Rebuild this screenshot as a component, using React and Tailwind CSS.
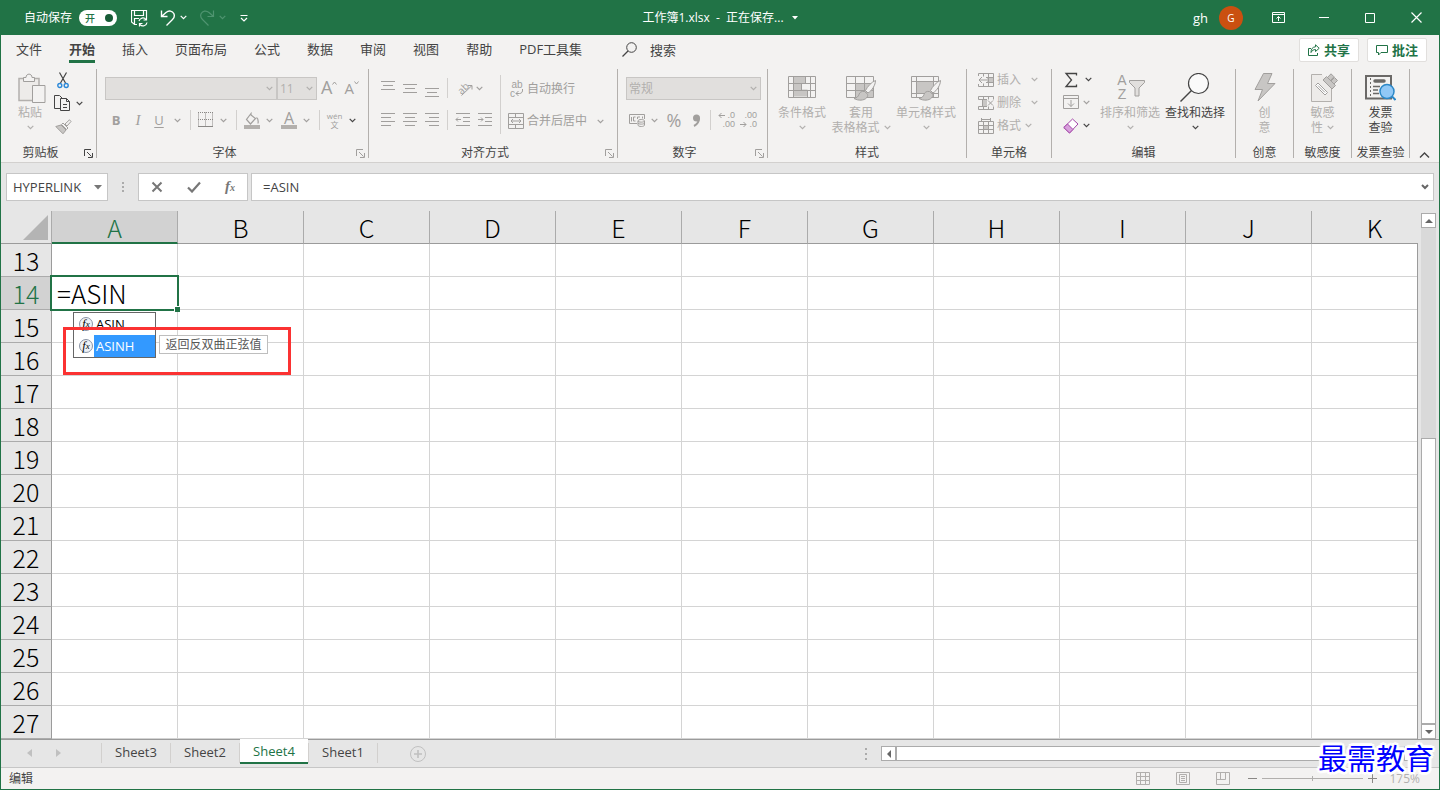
import { useState } from 'react';
import clsx from 'clsx';

const MENU_TABS = ['文件', '开始', '插入', '页面布局', '公式', '数据', '审阅', '视图', '帮助', 'PDF工具集'];
const COLUMNS = ['A', 'B', 'C', 'D', 'E', 'F', 'G', 'H', 'I', 'J', 'K'];
const ROWS = Array.from({ length: 15 }, (_, i) => i + 13);
const SHEETS = ['Sheet3', 'Sheet2', 'Sheet4', 'Sheet1'];

// 所有线条图标共用的 svg 外壳
function Icon({ w = 16, h = 16, className, children }) {
  return (
    <svg
      width={w}
      height={h}
      viewBox={`0 0 ${w} ${h}`}
      fill="none"
      stroke="currentColor"
      aria-hidden="true"
      className={clsx('shrink-0', className)}
    >
      {children}
    </svg>
  );
}

function Chevron({ className }) {
  return (
    <Icon w={7} h={5} className={className}>
      <path d="M.7 .9 3.5 3.7 6.3 .9" strokeWidth="1.2" />
    </Icon>
  );
}

function Divider({ className }) {
  return <span className={clsx('w-px shrink-0 bg-[#d2d0ce]', className)} />;
}

function ToolButton({ label, className, children }) {
  return (
    <button
      type="button"
      aria-label={label}
      className={clsx('flex h-6 shrink-0 items-center justify-center', className)}
    >
      {children}
    </button>
  );
}

function Group({ label, launcher, dark, className, children }) {
  return (
    <section className={clsx('flex h-[97px] shrink-0', className)}>
      <div className="flex min-w-0 flex-1 flex-col">
        <div className="flex flex-1">{children}</div>
        <div className="flex h-[18px] items-center text-[#444]">
          <span className="flex-1 text-center whitespace-nowrap">{label}</span>
          {launcher && (
            <button
              type="button"
              aria-label={`${label}设置`}
              className={clsx('w-4 pl-1', dark ? 'text-[#444]' : 'text-[#a19f9d]')}
            >
              <Icon w={9} h={9}>
                <path d="M.5 7V.5H7M3 3l4.500 4.500M8.500 4v4.500H4" />
              </Icon>
            </button>
          )}
        </div>
      </div>
      <span className="mt-1 h-[89px] w-px bg-[#b3b0ad]" />
    </section>
  );
}

function BigButton({ icon, lines, chevron, inline, className }) {
  return (
    <button
      type="button"
      className={clsx('flex shrink-0 flex-col items-center pt-2 leading-[15px] whitespace-nowrap', className)}
    >
      <span className="flex h-8 items-start">{icon}</span>
      <span>{lines[0]}</span>
      {lines[1] && (
        <span className="flex items-center gap-1">
          {lines[1]}
          {inline && <Chevron />}
        </span>
      )}
      {chevron && (
        <span className="flex h-[15px] items-center">
          <Chevron />
        </span>
      )}
    </button>
  );
}

function Picker({ label, value, className }) {
  return (
    <label
      className={clsx(
        'flex h-[23px] items-center border border-[#c8c6c4] bg-[#e1dfdd] pr-[3px] text-[#b1afad]',
        className
      )}
    >
      <select aria-label={label} className="min-w-0 flex-1 appearance-none bg-transparent pl-[2px] outline-none">
        <option>{value}</option>
      </select>
      <Chevron />
    </label>
  );
}

function Lines({ rows }) {
  return (
    <Icon w={16} h={17}>
      {rows.map(([x1, x2, y]) => (
        <path key={y} d={`M${x1} ${y}.5H${x2}`} />
      ))}
    </Icon>
  );
}

function Brush() {
  return (
    <>
      <path d="M29.500 7.500c-4 1.500-8 6-10 10l2.500 2.500C26 17.500 29.500 12 29.500 7.500Z" fill="#f3f2f1" />
      <path d="M18.500 18.500c-3-.5-5 .8-5.500 3-.4 2-2.500 3.500-5 4 4.500 2.500 10 2 12.500-.5 1.500-1.500 1.500-3.500.5-4.500Z" fill="#c8c6c4" />
    </>
  );
}

function TitleBar() {
  const [autoSave, setAutoSave] = useState(true);

  return (
    <header className="-mx-px flex h-[35px] items-center bg-[#217346] text-white">
      <div className="flex flex-1 items-center">
        <label className="ml-6 flex items-center gap-[7px]">
          自动保存
          <input
            type="checkbox"
            className="sr-only"
            checked={autoSave}
            onChange={(e) => setAutoSave(e.target.checked)}
          />
          <span className="flex h-4 w-[38px] items-center justify-between rounded-full bg-white pr-1 pl-[6px] text-[10px] font-medium text-[#217346]">
            开
            <span className="size-2 rounded-full bg-[#185c37]" />
          </span>
        </label>
        <button type="button" aria-label="保存" className="ml-[14px]">
          <Icon w={17} h={18}>
            <path d="M6 15.500H3.500L.5 13V1.500h15V8M3.500 1.500V6.500h9v-5M3.500 15V9.500H8" strokeWidth="1.2" />
            <path d="M8 12a4 4 0 0 1 7-1.500M15.500 8v3H12.500M16 13.500a4 4 0 0 1-7 2M8.500 17.500v-3h3" strokeWidth="1.2" />
          </Icon>
        </button>
        <button type="button" aria-label="撤消" className="ml-3 flex items-center gap-1">
          <Icon w={16} h={18}>
            <path d="M1.500 1.500v6h6M1.500 7.500 6 3.500c3-2.500 6.500-1.500 7.800 1 1.200 2.500.2 4.500-1.300 6L6.500 16.500" strokeWidth="1.400" />
          </Icon>
          <Chevron />
        </button>
        <button type="button" aria-label="恢复" className="ml-3 flex items-center gap-1 text-[#4f9470]">
          <Icon w={16} h={18}>
            <path d="M14.500 1.500v6h-6M14.500 7.500 10 3.500C7 1 3.500 2 2.200 4.500 1 7 2 9 3.500 10.500L9.500 16.500" strokeWidth="1.200" />
          </Icon>
          <Chevron />
        </button>
        <button type="button" aria-label="自定义快速访问工具栏" className="ml-[14px]">
          <Icon w={8} h={8}>
            <path d="M.5 1.500h7M1 4l3 3 3-3" strokeWidth="1.200" />
          </Icon>
        </button>
      </div>

      <h1 className="flex items-center gap-2 whitespace-pre">
        工作簿1.xlsx  -  正在保存...
        <Icon w={6} h={4}>
          <path d="M0 0h6L3 3.500Z" fill="currentColor" stroke="none" />
        </Icon>
      </h1>

      <div className="flex flex-1 items-center justify-end">
        <span className="mr-[11px] text-[13px]">gh</span>
        <span className="mr-3 flex size-6 items-center justify-center rounded-full bg-[#ca5010] text-[10px]">
          G
        </span>
        <button type="button" aria-label="功能区显示选项" className="flex w-[46px] justify-center">
          <Icon w={13} h={11}>
            <path d="M.5.5h12v10H.5ZM.5 2.500h12M6.500 9V4.500M4.500 6.500l2-2 2 2" />
          </Icon>
        </button>
        <button type="button" aria-label="最小化" className="flex w-[46px] justify-center">
          <Icon w={10} h={11}>
            <path d="M0 5.500h10" />
          </Icon>
        </button>
        <button type="button" aria-label="最大化" className="flex w-[46px] justify-center">
          <Icon w={10} h={10}>
            <path d="M.5.5h9v9h-9Z" />
          </Icon>
        </button>
        <button type="button" aria-label="关闭" className="mr-px flex w-[46px] justify-center">
          <Icon w={11} h={11}>
            <path d="M.5.5l10 10M10.500.5l-10 10" strokeWidth="1.200" />
          </Icon>
        </button>
      </div>
    </header>
  );
}

function MenuTabs() {
  return (
    <nav className="flex h-[30px] items-center pr-3 pl-[15px] text-[13px] text-[#444]">
      <div className="flex gap-[27px]">
        {MENU_TABS.map((tab) => (
          <button
            key={tab}
            type="button"
            className={clsx(
              'h-[26px] border-b-3 leading-[22px] whitespace-nowrap',
              tab === '开始' ? 'border-[#217346] font-bold' : 'border-transparent'
            )}
          >
            {tab}
          </button>
        ))}
      </div>
      <button type="button" className="ml-10 flex items-center gap-[13px] pb-px">
        <Icon w={15} h={15}>
          <circle cx="9.500" cy="5.500" r="4.800" />
          <path d="M6 9 .5 14.500" strokeWidth="1.200" />
        </Icon>
        搜索
      </button>
      <div className="ml-auto flex gap-2 font-bold text-[#217346]">
        <button
          type="button"
          className="flex h-6 w-[60px] items-center justify-center gap-1 rounded-xs border border-[#e1dfdd] bg-white"
        >
          <Icon w={12} h={12}>
            <path d="M3 4.500H.5v7h9V9M7.500.8l3.700 3.500L7.500 7.500V5.500C5.500 5.500 4 6.500 3 8.500c0-3.500 1.500-5.500 4.500-5.700Z" />
          </Icon>
          共享
        </button>
        <button
          type="button"
          className="flex h-6 w-[60px] items-center justify-center gap-1 rounded-xs border border-[#e1dfdd] bg-white"
        >
          <Icon w={12} h={11}>
            <path d="M.5.5h11v7H5l-2.500 2.500V7.500h-2Z" />
          </Icon>
          批注
        </button>
      </div>
    </nav>
  );
}

function ClipboardGroup() {
  return (
    <Group label="剪贴板" launcher dark className="w-24">
      <BigButton
        className="ml-3 w-[34px]"
        lines={['粘贴']}
        chevron
        icon={
          <Icon w={28} h={31} className="ml-1 text-[#a19f9d]">
            <path d="M1 5.500h20v22H1Z" fill="#edebe9" stroke="#b3b0ad" strokeWidth="1.500" />
            <path d="M5.500 8.500v-4H8C8 0 14 0 14 4.500h2.500v4Z" fill="#f3f2f1" />
            <path d="M14.500 12.500h12.500v17H14.500Z" fill="#f3f2f1" />
          </Icon>
        }
      />
      <div className="flex flex-col items-start pt-1 pl-[7px] text-[#444]">
        <ToolButton label="剪切" className="h-[23px] w-[18px]">
          <Icon w={12} h={17}>
            <path d="M2.500.5 8.500 11M9.500.5 3.500 11" strokeWidth="1.200" />
            <circle cx="2.800" cy="13.500" r="2" stroke="#2b88d8" strokeWidth="1.400" />
            <circle cx="9.200" cy="13.500" r="2" stroke="#2b88d8" strokeWidth="1.400" />
          </Icon>
        </ToolButton>
        <ToolButton label="复制" className="h-[23px] gap-[5px]">
          <Icon w={17} h={17}>
            <path d="M6 13.500H.5V.5h5l3 3M6.500 3.500h6l3 3v9h-9ZM12.500 3.500v3h3M9 9.500h4M9 12.500h4" />
          </Icon>
          <Chevron />
        </ToolButton>
        <ToolButton label="格式刷" className="h-[23px] w-[18px] text-[#a19f9d]">
          <Icon w={17} h={16}>
            <path d="M14.500.8 10 5l2 2 4-4.500ZM8 4l5 5-1.500 1.500-5-5Z" fill="#f3f2f1" />
            <path d="M6 6 .8 7.500 8 14.800 11 11Z" fill="#c8c6c4" />
          </Icon>
        </ToolButton>
      </div>
    </Group>
  );
}

function FontGroup() {
  return (
    <Group label="字体" launcher className="w-[272px]">
      <div className="flex flex-col gap-2 pt-3 pl-2 text-[#a19f9d]">
        <div className="flex items-center">
          <Picker label="字体名称" value="" className="w-[172px]" />
          <Picker label="字号" value="11" className="w-10" />
          <ToolButton label="增大字号" className="ml-1 h-[23px] items-start text-[18px] leading-5">
            A
            <Icon w={5} h={4} className="mt-1">
              <path d="M.5 3.500 2.500 1l2 2.500" />
            </Icon>
          </ToolButton>
          <ToolButton label="减小字号" className="ml-[7px] h-[23px] items-start text-[15px] leading-[22px]">
            A
            <Icon w={5} h={4} className="mt-1">
              <path d="M.5.5 2.500 3l2-2.500" />
            </Icon>
          </ToolButton>
        </div>
        <div className="flex items-center text-[13px]">
          <ToolButton label="加粗" className="w-[22px] font-bold">
            B
          </ToolButton>
          <ToolButton label="倾斜" className="w-[22px] font-['Liberation_Serif',serif] text-[15px] italic">
            I
          </ToolButton>
          <ToolButton label="下划线" className="w-5 underline underline-offset-2">
            U
          </ToolButton>
          <ToolButton label="下划线样式" className="w-4">
            <Chevron />
          </ToolButton>
          <Divider className="ml-[5px] h-5" />
          <ToolButton label="边框" className="w-[29px]">
            <Icon w={15} h={16}>
              <path d="M0 .5h15M0 7.500h15M.5.5v14M7.500.5v14M14.500.5v14" strokeDasharray="1 1" stroke="#8a8886" />
              <path d="M0 14.500h15" stroke="#8a8886" />
            </Icon>
          </ToolButton>
          <Chevron />
          <Divider className="ml-[9px] h-5" />
          <ToolButton label="填充颜色" className="w-[29px]">
            <Icon w={16} h={17}>
              <path d="M7 1.500 2.500 7.500l4 4.500L11.500 6.500 7 3Z M12.500 5.500c1.500 1 2 3 1.500 6" strokeWidth="1.200" />
              <path d="M0 15h16" strokeWidth="4" stroke="#b3b0ad" />
            </Icon>
          </ToolButton>
          <Chevron />
          <ToolButton label="字体颜色" className="ml-[2px] w-7 flex-col">
            <span className="text-[16px] leading-[14px]">A</span>
            <span className="h-[4px] w-4 bg-[#b3b0ad]" />
          </ToolButton>
          <Chevron />
          <Divider className="ml-[9px] h-5" />
          <ToolButton label="拼音指南" className="w-[29px] flex-col text-[8px] leading-[9px]">
            <span>wén</span>
            <span>文</span>
          </ToolButton>
          <Chevron className="text-[#444]" />
        </div>
      </div>
    </Group>
  );
}

function AlignGroup() {
  return (
    <Group label="对齐方式" launcher className="w-[249px]">
      <div className="flex text-[#a19f9d]">
        <div className="flex w-[131px] flex-col gap-2 pt-[11px] pl-2">
          <div className="flex items-center">
            <ToolButton label="顶端对齐" className="w-[22px]">
              <Lines rows={[[1, 15, 1], [3, 13, 5], [1, 15, 9]]} />
            </ToolButton>
            <ToolButton label="垂直居中" className="w-[22px]">
              <Lines rows={[[1, 15, 4], [3, 13, 8], [1, 15, 12]]} />
            </ToolButton>
            <ToolButton label="底端对齐" className="w-[22px]">
              <Lines rows={[[1, 15, 8], [3, 13, 12], [1, 15, 16]]} />
            </ToolButton>
            <Divider className="ml-1 h-5" />
            <ToolButton label="方向" className="ml-[6px] w-[22px]">
              <span className="-rotate-45 text-[10px] leading-[10px]">ab</span>
              <Icon w={12} h={12} className="mt-1 -ml-2">
                <path d="M.5 11.500 11 1.500M7 1.500h4v4" />
              </Icon>
            </ToolButton>
            <Chevron />
          </div>
          <div className="flex items-center">
            <ToolButton label="左对齐" className="w-[22px]">
              <Lines rows={[[1, 15, 1], [1, 11, 5], [1, 15, 9], [1, 11, 13]]} />
            </ToolButton>
            <ToolButton label="居中" className="w-[22px]">
              <Lines rows={[[1, 15, 1], [3, 13, 5], [1, 15, 9], [3, 13, 13]]} />
            </ToolButton>
            <ToolButton label="右对齐" className="w-[22px]">
              <Lines rows={[[1, 15, 1], [5, 15, 5], [1, 15, 9], [5, 15, 13]]} />
            </ToolButton>
            <Divider className="ml-1 h-5" />
            <ToolButton label="减少缩进量" className="ml-1 w-[22px]">
              <Icon w={16} h={16}>
                <path d="M1 1.500h14M8 5.500h7M8 9.500h7M1 13.500h14M6 7.500H1M3 5.500l-2 2 2 2" />
              </Icon>
            </ToolButton>
            <ToolButton label="增加缩进量" className="w-[22px]">
              <Icon w={16} h={16}>
                <path d="M1 1.500h14M8 5.500h7M8 9.500h7M1 13.500h14M1 7.500h5M4 5.500l2 2-2 2" />
              </Icon>
            </ToolButton>
          </div>
        </div>
        <Divider className="mt-[10px] h-[59px]" />
        <div className="flex flex-col items-start gap-2 pt-3 pl-[7px]">
          <ToolButton className="gap-[3px]">
            <span className="flex w-4 flex-col pl-[2px] font-['Liberation_Sans',sans-serif] text-[10px] leading-[9px]">
              <span>ab</span>
              <span className="flex items-center">
                c
                <Icon w={8} h={9}>
                  <path d="M7.500 0c.5 3-1 4.500-3 4.500H1M3.500 2 1 4.500 3.500 7" />
                </Icon>
              </span>
            </span>
            自动换行
          </ToolButton>
          <ToolButton className="gap-[3px]">
            <Icon w={16} h={16}>
              <path d="M.5.5h15v15H.5ZM.5 4.500h15M.5 11.500h15M7.500.5v4M7.500 11.500v4M3 8h10M5 6 3 8l2 2M11 6l2 2-2 2" />
            </Icon>
            合并后居中
            <Chevron className="ml-[7px]" />
          </ToolButton>
        </div>
      </div>
    </Group>
  );
}

function NumberGroup() {
  return (
    <Group label="数字" launcher className="w-[150px]">
      <div className="flex flex-col gap-2 pt-3 pl-2 text-[#a19f9d]">
        <Picker label="数字格式" value="常规" className="w-[135px]" />
        <div className="flex items-center">
          <ToolButton label="会计数字格式" className="w-[22px]">
            <Icon w={16} h={14}>
              <path d="M8 10.500H.5V1.500h15V6M2.500 4v4.500M6.500 4H4.500v4h2M8.500 6V4h2.500M13.500 3.500v2M9 8c0-2 6.500-2 6.500 0v4c0 2-6.500 2-6.500 0ZM9 8c0 1.500 6.500 1.500 6.500 0M9 10c0 1.500 6.500 1.500 6.500 0" />
            </Icon>
          </ToolButton>
          <Chevron className="ml-[3px]" />
          <ToolButton label="百分比样式" className="ml-[6px] w-5 text-[18px]">
            %
          </ToolButton>
          <ToolButton label="千位分隔样式" className="ml-[2px] w-5">
            <Icon w={9} h={13}>
              <circle cx="4.500" cy="4" r="3.500" fill="currentColor" stroke="none" />
              <path d="M7 4c0 4-2 6.500-5 8" strokeWidth="2" />
            </Icon>
          </ToolButton>
          <Divider className="ml-1 h-5" />
          <ToolButton
            label="增加小数位数"
            className="ml-[6px] w-[18px] flex-col items-end font-['Liberation_Sans',sans-serif] text-[9px] leading-[9px]"
          >
            <span className="flex items-center gap-[2px]">
              <Icon w={7} h={7}>
                <path d="M7 3.500H1M3.500 1 1 3.500 3.500 6" />
              </Icon>
              .0
            </span>
            <span>.00</span>
          </ToolButton>
          <ToolButton
            label="减少小数位数"
            className="ml-1 w-[18px] flex-col items-end font-['Liberation_Sans',sans-serif] text-[9px] leading-[9px]"
          >
            <span>.00</span>
            <span className="flex items-center gap-[2px]">
              <Icon w={7} h={7}>
                <path d="M0 3.500h6M3.500 1 6 3.500 3.500 6" />
              </Icon>
              .0
            </span>
          </ToolButton>
        </div>
      </div>
    </Group>
  );
}

function StylesGroup() {
  return (
    <Group label="样式" className="w-[199px]">
      <BigButton
        className="ml-1 w-[60px]"
        lines={['条件格式']}
        chevron
        icon={
          <Icon w={28} h={26} className="text-[#a19f9d]">
            <path d="M5.500 3.500h12v7h-4v6h6v7h-14Z" fill="#c8c6c4" stroke="none" />
            <path d="M.5 3.500h27v21H.5ZM.5 10.500h27M.5 17.500h27M5.500 3.500v21M17.500 3.500v7M13.500 10.500v7M19.500 17.500v7M22.500 3.500v21" />
          </Icon>
        }
      />
      <BigButton
        className="w-[58px]"
        lines={['套用', '表格格式']}
        inline
        icon={
          <Icon w={31} h={30} className="text-[#a19f9d]">
            <path d="M10 10.500h17v14H10Z" fill="#c8c6c4" stroke="none" />
            <path d="M.5 3.500h27v21H.5ZM.5 10.500h27M.5 17.500h27M9.500 3.500v21M18.500 3.500v21" />
            <Brush />
          </Icon>
        }
      />
      <BigButton
        className="w-[72px]"
        lines={['单元格样式']}
        chevron
        icon={
          <Icon w={31} h={30} className="text-[#a19f9d]">
            <path d="M5.500 8.500h17v12h-17Z" fill="#c8c6c4" stroke="none" />
            <path d="M.5 3.500h27v21H.5ZM.5 8.500h27M.5 20.500h27M5.500 3.500v21M22.500 3.500v21" />
            <Brush />
          </Icon>
        }
      />
    </Group>
  );
}

function CellsGroup() {
  return (
    <Group label="单元格" className="w-[85px]">
      <div className="flex flex-col items-start pt-[3px] pl-[11px]">
        <ToolButton className="h-[23px] gap-[3px]">
          <Icon className="text-[#a19f9d]">
            <path d="M9 5h6v6H9Z" fill="#c8c6c4" stroke="none" />
            <path d="M.5 4V1.500h15v13H.5V12M5.500 1.500v3M10.500 1.500v13M5.500 11.500v3M8 5.500h7.500M8 10.500h7.500M1 8h8M4 5 1 8l3 3" />
          </Icon>
          插入
          <Chevron className="ml-[7px]" />
        </ToolButton>
        <ToolButton className="h-[23px] gap-[3px]">
          <Icon className="text-[#a19f9d]">
            <path d="M4 5h5v6H4Z" fill="#c8c6c4" stroke="none" />
            <path d="M.5 4.500v-3h15v3M.5 11.500v3h15v-3M5.500 1.500v3M10.500 1.500v3M5.500 11.500v3M10.500 11.500v3M.5 4.500H9M.5 11.500H9M4.500 4.500v7M10 5.500l5 5M15 5.500l-5 5" />
          </Icon>
          删除
          <Chevron className="ml-[7px]" />
        </ToolButton>
        <ToolButton className="h-[23px] gap-[3px]">
          <Icon className="text-[#a19f9d]">
            <path d="M5 7h6v5H5Z" fill="#c8c6c4" stroke="none" />
            <path d="M.5 3.500h15v12H.5ZM.5 7.500h15M.5 11.500h15M5.500 3.500v12M10.500 3.500v12M3.500 0v3M12.500 0v3M3.500 1.500h9" />
          </Icon>
          格式
          <Chevron className="ml-px" />
        </ToolButton>
      </div>
    </Group>
  );
}

function EditingGroup() {
  return (
    <Group label="编辑" className="w-[184px]">
      <div className="flex w-[45px] flex-col items-start pt-[3px] pl-[11px] text-[#444]">
        <ToolButton label="求和" className="h-[23px] gap-[6px]">
          <Icon w={16} h={16}>
            <path d="M13.500 3.500v-2H3L8.500 8 3 14.500h10.500v-2" strokeWidth="1.300" />
          </Icon>
          <Chevron />
        </ToolButton>
        <ToolButton label="填充" className="h-[23px] gap-1 text-[#a19f9d]">
          <Icon w={16} h={15}>
            <path d="M.5.5h15v13H.5ZM.5 3.500h15M8 5v6.500M5 8.500l3 3 3-3" />
          </Icon>
          <Chevron />
        </ToolButton>
        <ToolButton label="清除" className="h-[23px] gap-1">
          <Icon w={16} h={16} className="text-[#a347a8]">
            <path d="M.8 9.500 9.500 1l5.500 5-8.500 9Z" fill="#fff" />
            <path d="M.8 9.500 4.500 6l5.500 5.500L6.500 15Z" fill="#d8a0dc" />
          </Icon>
          <Chevron />
        </ToolButton>
      </div>
      <BigButton
        className="w-[66px]"
        lines={['排序和筛选']}
        chevron
        icon={
          <span className="flex text-[#a19f9d]">
            <span className="flex w-[13px] flex-col font-['Liberation_Sans',sans-serif] text-[14px] leading-[14px]">
              <span>A</span>
              <span>Z</span>
            </span>
            <Icon w={16} h={25}>
              <path d="M.5 7.500h15v2l-5.500 5.500v8H6v-8L.5 9.500Z" fill="#e1dfdd" />
            </Icon>
          </span>
        }
      />
      <BigButton
        className="w-[64px] text-[#444]"
        lines={['查找和选择']}
        chevron
        icon={
          <Icon w={30} h={30}>
            <circle cx="18.500" cy="10.500" r="10" fill="#fafafa" strokeWidth="1.200" />
            <path d="M11.500 17.500.5 28.500" strokeWidth="1.400" />
          </Icon>
        }
      />
    </Group>
  );
}

function Ribbon() {
  return (
    <div className="flex h-[98px] border-b border-[#d2d0ce] text-[#b1afad]">
      <ClipboardGroup />
      <FontGroup />
      <AlignGroup />
      <NumberGroup />
      <StylesGroup />
      <CellsGroup />
      <EditingGroup />
      <Group label="创意" className="w-[58px]">
        <BigButton
          className="w-full"
          lines={['创', '意']}
          icon={
            <Icon w={22} h={29} className="text-[#a19f9d]">
              <path d="M9.500.5h8.500L13.500 10.500h7.500L4 28l4.500-11.500H1Z" fill="#c8c6c4" />
            </Icon>
          }
        />
      </Group>
      <Group label="敏感度" className="w-[58px]">
        <BigButton
          className="w-full"
          lines={['敏感', '性']}
          inline
          icon={
            <Icon w={27} h={30} className="ml-[3px] text-[#a19f9d]">
              <path d="M11 1.500H.5v27h20V15" fill="#edebe9" stroke="#b3b0ad" />
              <path d="m4.500 12.500 2.500-2.500 9.500 9.500-2.500 2.500Z" fill="#fff" />
              <path d="m7 12.500 7 7" />
              <path d="m12 7 3.500-3.500 9 9L21 16ZM16.500 4.500 20 .8l3 3-3.500 3.700M20 8l3.500-3.500 3 3L23 11" fill="#c8c6c4" />
            </Icon>
          }
        />
      </Group>
      <Group label="发票查验" className="w-[58px]">
        <BigButton
          className="w-full text-[#444]"
          lines={['发票', '查验']}
          icon={
            <Icon w={31} h={28} className="text-[#6b6967]">
              <path d="M1 3h25v22.500H1Z" strokeWidth="2" />
              <path d="M5.500 5v19" strokeDasharray="2 2" />
              <path d="M10 8h9" strokeWidth="3.500" strokeLinecap="round" />
              <path d="M8 13.500h7M8 17h5M8 20.500h6" strokeWidth="1.500" />
              <circle cx="22" cy="18.500" r="7" fill="#91c8f6" stroke="#2b88c8" strokeWidth="1.500" />
              <path d="m27 23.500 3.500 3.500" stroke="#2b88c8" strokeWidth="2" />
            </Icon>
          }
        />
      </Group>
      <div className="flex flex-1 items-end justify-center pb-1">
        <button type="button" aria-label="折叠功能区" className="text-[#444]">
          <Icon w={11} h={6}>
            <path d="M1 5.500 5.500 1 10 5.500" strokeWidth="1.400" />
          </Icon>
        </button>
      </div>
    </div>
  );
}

function FormulaBar() {
  return (
    <div className="flex h-12 items-center bg-[#e6e6e6] pr-[5px] pl-[5px] text-[13px] text-[#444]">
      <label className="flex h-7 w-[102px] shrink-0 items-center border border-[#c6c6c6] bg-white pr-[5px]">
        <input
          aria-label="名称框"
          defaultValue="HYPERLINK"
          className="min-w-0 flex-1 pl-[6px] outline-none"
        />
        <Icon w={8} h={5} className="text-[#777]">
          <path d="M0 0h8L4 4.500Z" fill="currentColor" stroke="none" />
        </Icon>
      </label>
      <span className="mx-[14px] flex flex-col gap-[2px]">
        <i className="size-[2px] bg-[#ababab]" />
        <i className="size-[2px] bg-[#ababab]" />
        <i className="size-[2px] bg-[#ababab]" />
      </span>
      <div className="flex h-7 w-[110px] shrink-0 items-center justify-around border border-[#c6c6c6] bg-white text-[#777]">
        <button type="button" aria-label="取消">
          <Icon w={12} h={12}>
            <path d="m1.500 1.500 9 9M10.500 1.500l-9 9" strokeWidth="2" />
          </Icon>
        </button>
        <button type="button" aria-label="输入">
          <Icon w={14} h={12}>
            <path d="M1 6.500 5 10.500 13 1.500" strokeWidth="2.200" />
          </Icon>
        </button>
        <button type="button" aria-label="插入函数" className="font-['Liberation_Serif',serif] text-[15px] font-bold italic">
          f<span className="text-[10px]">x</span>
        </button>
      </div>
      <label className="ml-[3px] flex h-7 min-w-0 flex-1 items-center border border-[#c6c6c6] bg-white pr-1">
        <input aria-label="编辑栏" defaultValue="=ASIN" className="min-w-0 flex-1 pl-[11px] outline-none" />
        <Icon w={8} h={6} className="text-[#666]">
          <path d="M1 1l3 3 3-3" strokeWidth="2" />
        </Icon>
      </label>
    </div>
  );
}

function FxBadge() {
  return (
    <span className="flex size-[14px] shrink-0 items-center justify-center rounded-full border border-[#8a94a6] bg-[#eef1f6] font-['Liberation_Serif',serif] text-[12px] leading-3 text-black italic">
      f<span className="text-[9px]">x</span>
    </span>
  );
}

// 正在编辑的单元格：绿色边框、函数提示列表和说明
function ActiveCell() {
  return (
    <>
      <span className="absolute -inset-x-[2px] -inset-y-[2px] z-10 border-2 border-[#217346]" />
      <span className="absolute -right-[3px] -bottom-[3px] z-10 size-[6px] border-t border-l border-white bg-[#217346]" />
      <span className="relative pl-[5px] text-[26px] leading-8">=ASIN</span>
      <ul className="absolute top-[35px] left-[21px] z-10 h-[46px] w-[83px] border border-[#666] bg-white font-['Open_Sans',sans-serif] text-[13px] leading-[22px] font-normal text-black">
        <li className="flex h-[22px] items-center gap-px pl-[5px]">
          <FxBadge />
          <span className="pl-[2px]">ASIN</span>
        </li>
        <li className="flex h-[22px] items-center gap-px pl-[5px]">
          <FxBadge />
          <span className="h-full flex-1 bg-[#3399ff] pl-[2px] text-white">ASINH</span>
        </li>
      </ul>
      <span className="absolute top-[58px] left-[107px] z-10 h-[19px] w-[109px] border border-[#bebebe] bg-white text-center text-[12px] leading-4 font-normal whitespace-nowrap text-[#575757]">
        返回反双曲正弦值
      </span>
      <span className="absolute top-[50px] left-[11px] z-20 h-12 w-[228px] border-3 border-[#fb3232]" />
    </>
  );
}

function Grid() {
  return (
    <table className="w-max border-separate border-spacing-0 font-['Noto_Sans_CJK_SC',sans-serif] text-[25px] leading-7 font-light text-black">
      <thead>
        <tr>
          <th className="h-[33px] w-[51px] min-w-[51px] border-r border-b border-[#ababab] border-b-[#9b9b9b] p-0">
            <Icon w={25} h={25} className="ml-[22px]">
              <path d="M25 0v25H0Z" fill="#b4b4b4" stroke="none" />
            </Icon>
          </th>
          {COLUMNS.map((col) => (
            <th
              key={col}
              scope="col"
              className={clsx(
                'h-[33px] w-[126px] min-w-[126px] border-r border-r-[#ababab] p-0 font-light',
                col === 'A'
                  ? 'border-b-2 border-b-[#217346] bg-[#d2d2d2] text-[#217346]'
                  : 'border-b border-b-[#9b9b9b]'
              )}
            >
              {col}
            </th>
          ))}
        </tr>
      </thead>
      <tbody>
        {ROWS.map((row) => (
          <tr key={row}>
            <th
              scope="row"
              className={clsx(
                'h-[33px] border-r border-b border-[#ababab] border-r-[#9b9b9b] p-0 font-light',
                row === 14 && 'bg-[#d2d2d2] text-[#217346]'
              )}
            >
              {row}
            </th>
            {COLUMNS.map((col) => (
              <td key={col} className="relative h-[33px] border-r border-b border-[#d4d4d4] bg-white p-0">
                {row === 14 && col === 'A' && <ActiveCell />}
              </td>
            ))}
          </tr>
        ))}
      </tbody>
    </table>
  );
}

function ScrollButton({ label, d, className }) {
  return (
    <button
      type="button"
      aria-label={label}
      className={clsx('flex size-[15px] shrink-0 items-center justify-center border border-[#ababab] bg-white text-[#666]', className)}
    >
      <Icon w={8} h={8}>
        <path d={d} fill="currentColor" stroke="none" />
      </Icon>
    </button>
  );
}

function Worksheet() {
  return (
    <main className="flex flex-1 bg-[#e6e6e6]">
      <div className="min-w-0 flex-1 overflow-hidden">
        <Grid />
      </div>
      <span className="mt-8 w-px bg-[#9b9b9b]" />
      <div className="mr-[3px] ml-[3px] flex w-[15px] flex-col pt-[2px]">
        <ScrollButton label="向上滚动" d="M0 6h8L4 2Z" />
        <div className="flex-[211] bg-[#d9d9d9]" />
        <div className="flex-[286] border border-[#ababab] bg-white" />
        <ScrollButton label="向下滚动" d="M0 2h8L4 6Z" />
      </div>
    </main>
  );
}

function SheetTabs() {
  const [active, setActive] = useState('Sheet4');

  return (
    <div className="flex h-7 border-t border-[#9b9b9b] bg-[#e6e6e6] text-[13px] text-[#444]">
      <div className="flex w-[101px] items-center gap-6 pb-[2px] pl-[26px] text-[#c0c0c0]">
        <button type="button" aria-label="上一个工作表">
          <Icon w={5} h={8}>
            <path d="M5 0v8L0 4Z" fill="currentColor" stroke="none" />
          </Icon>
        </button>
        <button type="button" aria-label="下一个工作表">
          <Icon w={5} h={8}>
            <path d="M0 0v8l5-4Z" fill="currentColor" stroke="none" />
          </Icon>
        </button>
      </div>
      <div className="flex">
        <Divider className="mt-[3px] -ml-px h-5 bg-[#9b9b9b]" />
        {SHEETS.map((name) => (
          <div key={name} className="flex">
            <button
              type="button"
              onClick={() => setActive(name)}
              className={clsx(
                '-mt-px h-[25px] w-[68px] border-b-2 leading-6',
                name === active ? 'border-[#217346] bg-white text-[#217346]' : 'mt-0 h-6 border-transparent leading-[22px]'
              )}
            >
              {name}
            </button>
            <Divider className="mt-[3px] h-5 bg-[#9b9b9b]" />
          </div>
        ))}
      </div>
      <button type="button" aria-label="新工作表" className="ml-8 text-[#c0c0c0]">
        <Icon w={16} h={16}>
          <circle cx="8" cy="8" r="7.500" />
          <path d="M8 4v8M4 8h8" strokeWidth="1.600" />
        </Icon>
      </button>
      <span className="mr-[14px] ml-auto flex flex-col justify-center gap-[3px]">
        <i className="size-[2px] bg-[#ababab]" />
        <i className="size-[2px] bg-[#ababab]" />
        <i className="size-[2px] bg-[#ababab]" />
      </span>
      <div className="mt-[6px] mr-5 flex h-[15px] w-[38%] max-w-[538px] bg-[#d9d9d9]">
        <ScrollButton label="向左滚动" d="M6 0v8L2 4Z" />
        <div className="flex-[434] border border-[#ababab] bg-white" />
        <div className="flex-[74]" />
        <ScrollButton label="向右滚动" d="M2 0v8l4-4Z" />
      </div>
    </div>
  );
}

function StatusBar() {
  return (
    <footer className="flex h-[22px] items-center border-t border-[#c6c6c6] pr-[19px] pl-2 text-[#444]">
      编辑
      <div className="ml-auto flex items-center text-[#b1afad]">
        <button type="button" aria-label="普通" className="mr-[26px]">
          <Icon w={14} h={14}>
            <path d="M.5.5h13v12H.5ZM.5 4.500h13M.5 8.500h13M4.500.5v12M9.500.5v12" />
          </Icon>
        </button>
        <button type="button" aria-label="页面布局视图" className="mr-[26px]">
          <Icon w={14} h={14}>
            <path d="M.5.5h13v12H.5ZM3.500 2.500h7v8h-7ZM5 4.500h4M5 6.500h4M5 8.500h4" />
          </Icon>
        </button>
        <button type="button" aria-label="分页预览" className="mr-[18px]">
          <Icon w={14} h={14}>
            <path d="M.5.5h13v12H.5ZM.5 7.500h9v-7M4.500.5v7" />
          </Icon>
        </button>
        <button type="button" aria-label="缩小">
          <Icon w={9} h={9}>
            <path d="M0 4.500h9" stroke="#8a8886" />
          </Icon>
        </button>
        <Icon w={101} h={7} className="mx-[5px]">
          <path d="M0 3.500h101M50.500 1v5" />
        </Icon>
        <button type="button" aria-label="放大" className="mr-3">
          <Icon w={9} h={9}>
            <path d="M0 4.500h9M4.500 0v9" stroke="#8a8886" />
          </Icon>
        </button>
        175%
      </div>
    </footer>
  );
}

export default function App() {
  return (
    <div className="relative flex min-h-screen flex-col overflow-hidden border-x border-b border-[#217346] bg-[#f3f2f1] font-['Open_Sans','Noto_Sans_CJK_SC',sans-serif] text-[12px] leading-4">
      <TitleBar />
      <MenuTabs />
      <Ribbon />
      <FormulaBar />
      <Worksheet />
      <SheetTabs />
      <StatusBar />
      <span className="absolute right-[5px] bottom-4 font-['Noto_Sans_CJK_SC',sans-serif] text-[29px] leading-8 text-[#0000ff] [text-shadow:-2px_-2px_0_#fff,2px_-2px_0_#fff,-2px_2px_0_#fff,2px_2px_0_#fff,0_3px_1px_#fff,0_-3px_1px_#fff,3px_0_1px_#fff,-3px_0_1px_#fff]">
        最需教育
      </span>
    </div>
  );
}
